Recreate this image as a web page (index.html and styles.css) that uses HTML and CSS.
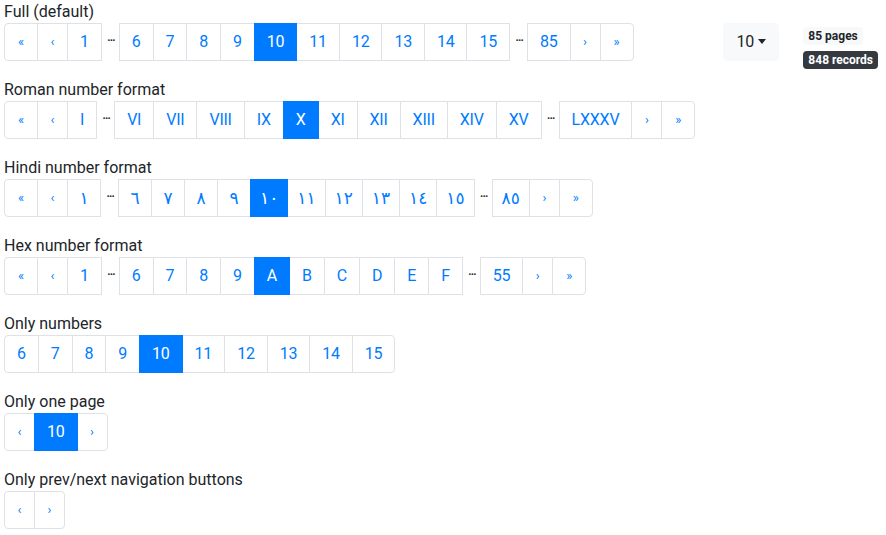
FILE: index.html
```html
<!DOCTYPE html>
<html lang="en">
<head>
<meta charset="utf-8">
<title>Pagination examples</title>
<link rel="stylesheet" href="styles.css">
</head>
<body>
<div class="demo">

  <section class="example">
    <div class="label">Full (default)</div>
    <div class="toolbar-row">
      <ul class="pagination">
        <li class="page-item"><a class="page-link arrow double">«</a></li>
        <li class="page-item"><a class="page-link arrow">‹</a></li>
        <li class="page-item"><a class="page-link">1</a></li>
        <li class="ellipsis"><span>…</span></li>
        <li class="page-item"><a class="page-link">6</a></li>
        <li class="page-item"><a class="page-link">7</a></li>
        <li class="page-item"><a class="page-link">8</a></li>
        <li class="page-item"><a class="page-link">9</a></li>
        <li class="page-item active"><a class="page-link">10</a></li>
        <li class="page-item"><a class="page-link">11</a></li>
        <li class="page-item"><a class="page-link">12</a></li>
        <li class="page-item"><a class="page-link">13</a></li>
        <li class="page-item"><a class="page-link">14</a></li>
        <li class="page-item"><a class="page-link">15</a></li>
        <li class="ellipsis"><span>…</span></li>
        <li class="page-item"><a class="page-link">85</a></li>
        <li class="page-item"><a class="page-link arrow">›</a></li>
        <li class="page-item"><a class="page-link arrow double">»</a></li>
      </ul>
      <div class="tools">
        <button class="btn-light" type="button">10<span class="caret"></span></button>
        <div class="badges">
          <span class="badge badge-light">85 pages</span>
          <span class="badge badge-dark">848 records</span>
        </div>
      </div>
    </div>
  </section>

  <section class="example">
    <div class="label">Roman number format</div>
    <ul class="pagination">
      <li class="page-item"><a class="page-link arrow double">«</a></li>
      <li class="page-item"><a class="page-link arrow">‹</a></li>
      <li class="page-item"><a class="page-link">I</a></li>
      <li class="ellipsis"><span>…</span></li>
      <li class="page-item"><a class="page-link">VI</a></li>
      <li class="page-item"><a class="page-link">VII</a></li>
      <li class="page-item"><a class="page-link">VIII</a></li>
      <li class="page-item"><a class="page-link">IX</a></li>
      <li class="page-item active"><a class="page-link">X</a></li>
      <li class="page-item"><a class="page-link">XI</a></li>
      <li class="page-item"><a class="page-link">XII</a></li>
      <li class="page-item"><a class="page-link">XIII</a></li>
      <li class="page-item"><a class="page-link">XIV</a></li>
      <li class="page-item"><a class="page-link">XV</a></li>
      <li class="ellipsis"><span>…</span></li>
      <li class="page-item"><a class="page-link">LXXXV</a></li>
      <li class="page-item"><a class="page-link arrow">›</a></li>
      <li class="page-item"><a class="page-link arrow double">»</a></li>
    </ul>
  </section>

  <section class="example">
    <div class="label">Hindi number format</div>
    <ul class="pagination hindi">
      <li class="page-item"><a class="page-link arrow double">«</a></li>
      <li class="page-item"><a class="page-link arrow">‹</a></li>
      <li class="page-item"><a class="page-link">١</a></li>
      <li class="ellipsis"><span>…</span></li>
      <li class="page-item"><a class="page-link">٦</a></li>
      <li class="page-item"><a class="page-link">٧</a></li>
      <li class="page-item"><a class="page-link">٨</a></li>
      <li class="page-item"><a class="page-link">٩</a></li>
      <li class="page-item active"><a class="page-link">١٠</a></li>
      <li class="page-item"><a class="page-link">١١</a></li>
      <li class="page-item"><a class="page-link">١٢</a></li>
      <li class="page-item"><a class="page-link">١٣</a></li>
      <li class="page-item"><a class="page-link">١٤</a></li>
      <li class="page-item"><a class="page-link">١٥</a></li>
      <li class="ellipsis"><span>…</span></li>
      <li class="page-item"><a class="page-link">٨٥</a></li>
      <li class="page-item"><a class="page-link arrow">›</a></li>
      <li class="page-item"><a class="page-link arrow double">»</a></li>
    </ul>
  </section>

  <section class="example">
    <div class="label">Hex number format</div>
    <ul class="pagination">
      <li class="page-item"><a class="page-link arrow double">«</a></li>
      <li class="page-item"><a class="page-link arrow">‹</a></li>
      <li class="page-item"><a class="page-link">1</a></li>
      <li class="ellipsis"><span>…</span></li>
      <li class="page-item"><a class="page-link">6</a></li>
      <li class="page-item"><a class="page-link">7</a></li>
      <li class="page-item"><a class="page-link">8</a></li>
      <li class="page-item"><a class="page-link">9</a></li>
      <li class="page-item active"><a class="page-link">A</a></li>
      <li class="page-item"><a class="page-link">B</a></li>
      <li class="page-item"><a class="page-link">C</a></li>
      <li class="page-item"><a class="page-link">D</a></li>
      <li class="page-item"><a class="page-link">E</a></li>
      <li class="page-item"><a class="page-link">F</a></li>
      <li class="ellipsis"><span>…</span></li>
      <li class="page-item"><a class="page-link">55</a></li>
      <li class="page-item"><a class="page-link arrow">›</a></li>
      <li class="page-item"><a class="page-link arrow double">»</a></li>
    </ul>
  </section>

  <section class="example">
    <div class="label">Only numbers</div>
    <ul class="pagination">
      <li class="page-item"><a class="page-link">6</a></li>
      <li class="page-item"><a class="page-link">7</a></li>
      <li class="page-item"><a class="page-link">8</a></li>
      <li class="page-item"><a class="page-link">9</a></li>
      <li class="page-item active"><a class="page-link">10</a></li>
      <li class="page-item"><a class="page-link">11</a></li>
      <li class="page-item"><a class="page-link">12</a></li>
      <li class="page-item"><a class="page-link">13</a></li>
      <li class="page-item"><a class="page-link">14</a></li>
      <li class="page-item"><a class="page-link">15</a></li>
    </ul>
  </section>

  <section class="example">
    <div class="label">Only one page</div>
    <ul class="pagination">
      <li class="page-item"><a class="page-link arrow">‹</a></li>
      <li class="page-item active"><a class="page-link">10</a></li>
      <li class="page-item"><a class="page-link arrow">›</a></li>
    </ul>
  </section>

  <section class="example">
    <div class="label">Only prev/next navigation buttons</div>
    <ul class="pagination">
      <li class="page-item"><a class="page-link arrow">‹</a></li>
      <li class="page-item"><a class="page-link arrow">›</a></li>
    </ul>
  </section>

</div>
</body>
</html>
```

FILE: styles.css
```css
* {
  box-sizing: border-box;
}

body {
  margin: 0;
  background: #fff;
  color: #212529;
  font-family: Roboto, "DejaVu Sans", sans-serif;
  font-size: 16px;
  line-height: 1.5;
}

.demo {
  padding: 0 8px 0 4px;
}

.example + .example {
  margin-top: 17px;
}

.label {
  height: 23px;
  line-height: 23px;
  white-space: nowrap;
}

.toolbar-row {
  display: flex;
  align-items: flex-start;
  height: 38px;
}

.pagination {
  display: flex;
  margin: 0;
  padding: 0;
  list-style: none;
}

.page-item {
  display: flex;
}

.page-link {
  display: block;
  padding: 8px 12px;
  line-height: 20px;
  height: 38px;
  color: #007bff;
  background: #fff;
  border: 1px solid #dee2e6;
  margin-left: -1px;
  cursor: pointer;
  white-space: nowrap;
  letter-spacing: -0.23px;
}

.page-item:first-child .page-link {
  margin-left: 0;
  border-radius: 4px 0 0 4px;
}

.page-item:last-child .page-link {
  border-radius: 0 4px 4px 0;
}

.ellipsis + .page-item .page-link {
  margin-left: 0;
}

.page-item.active .page-link {
  position: relative;
  z-index: 1;
  color: #fff;
  background: #007bff;
  border-color: #007bff;
}

.page-link.arrow {
  width: 31px;
  padding-left: 0;
  padding-right: 0;
  text-align: center;
  font-size: 13px;
  letter-spacing: 0;
}

.page-link.arrow.double {
  width: 34px;
}

.ellipsis {
  display: flex;
  align-items: center;
  justify-content: center;
  width: 17px;
  height: 38px;
  padding-left: 2px;
}

.ellipsis span {
  font-size: 11px;
  font-weight: 700;
  line-height: 12px;
  margin-bottom: 8px;
  color: #212529;
}

.hindi .page-link {
  min-width: 34px;
  text-align: center;
  font-family: "DejaVu Sans", sans-serif;
  font-size: 17px;
  letter-spacing: 0;
  padding-left: 9px;
  padding-right: 9px;
}

.hindi .page-link.arrow {
  min-width: 0;
  font-family: Roboto, sans-serif;
  font-size: 13px;
  padding-left: 0;
  padding-right: 0;
}

.tools {
  margin-left: auto;
  display: flex;
  align-items: flex-start;
  gap: 24px;
}

.btn-light {
  display: flex;
  align-items: center;
  height: 38px;
  padding: 6px 12px;
  font-family: inherit;
  font-size: 16px;
  line-height: 24px;
  color: #212529;
  background: #f8f9fa;
  border: 1px solid #f8f9fa;
  border-radius: 4px;
}

.caret {
  display: inline-block;
  margin-left: 4px;
  margin-bottom: 2px;
  border-top: 5px solid #212529;
  border-left: 4.5px solid transparent;
  border-right: 4.5px solid transparent;
}

.badges {
  display: flex;
  flex-direction: column;
  align-items: flex-start;
  gap: 6px;
  padding-top: 4px;
}

.badge {
  display: inline-block;
  padding: 3px 5px;
  font-size: 12px;
  font-weight: 700;
  line-height: 12px;
  border-radius: 4px;
  white-space: nowrap;
}

.badge-light {
  color: #212529;
  background: #f8f9fa;
}

.badge-dark {
  color: #fff;
  background: #343a40;
}
```
